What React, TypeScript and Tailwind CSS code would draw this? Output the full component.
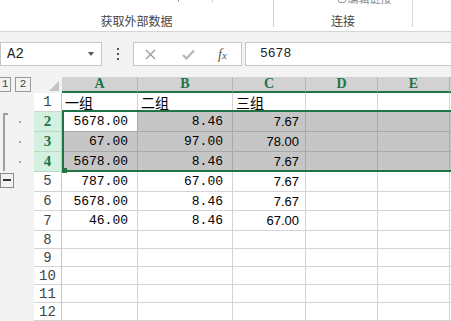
import React from "react";

type Cell = { v: string; kind: "mono" | "sans" | "cjk" };

const rowsData: (Cell[] | null)[] = [
  [
    { v: "一组", kind: "cjk" },
    { v: "二组", kind: "cjk" },
    { v: "三组", kind: "cjk" },
  ],
  [
    { v: "5678.00", kind: "mono" },
    { v: "8.46", kind: "mono" },
    { v: "7.67", kind: "sans" },
  ],
  [
    { v: "67.00", kind: "mono" },
    { v: "97.00", kind: "mono" },
    { v: "78.00", kind: "sans" },
  ],
  [
    { v: "5678.00", kind: "mono" },
    { v: "8.46", kind: "mono" },
    { v: "7.67", kind: "sans" },
  ],
  [
    { v: "787.00", kind: "mono" },
    { v: "67.00", kind: "mono" },
    { v: "7.67", kind: "sans" },
  ],
  [
    { v: "5678.00", kind: "mono" },
    { v: "8.46", kind: "mono" },
    { v: "7.67", kind: "sans" },
  ],
  [
    { v: "46.00", kind: "mono" },
    { v: "8.46", kind: "mono" },
    { v: "67.00", kind: "sans" },
  ],
  null,
  null,
  null,
  null,
  null,
];

const rowHeights = ["h-[19px]", "h-[20px]", "h-[20px]", "h-[20px]", "h-[20px]", "h-[20px]", "h-[20px]", "h-[18px]", "h-[18px]", "h-[18px]", "h-[18px]", "h-[18px]"];
const colWidths = ["w-[76px]", "w-[95px]", "w-[73px]", "w-[72px]", "w-[72px]"];
const colLetters = ["A", "B", "C", "D", "E"];

function Ribbon() {
  return (
    <div className="relative flex h-[32px] shrink-0 border-b border-[#d5d5d5] bg-white">
      <div className="relative flex h-[27px] w-[274px] flex-col items-center justify-end border-r border-[#d5d5d5]">
        <div className="absolute left-[178px] top-0 h-[2px] w-px bg-[#9a9a9a]" />
        <div className="absolute left-[212px] top-0 h-[2px] w-px bg-[#c8c8c8]" />
        <span className="text-[12px] leading-[12px] text-[#444]">获取外部数据</span>
      </div>
      <div className="flex h-[27px] w-[139px] flex-col items-center justify-between border-r border-[#d5d5d5]">
        <div className="ml-[-1px] h-[5px] w-full overflow-hidden pl-[64px]">
          <div className="mt-[-9px] flex items-center gap-[2px] text-[11px] leading-[14px] text-[#8a8a8a]">
            <span className="inline-block h-[10px] w-[8px] rounded-[2px] border border-[#9a9a9a]" />
            <span>编辑链接</span>
          </div>
        </div>
        <span className="text-[12px] leading-[12px] text-[#444]">连接</span>
      </div>
    </div>
  );
}

function FormulaBar() {
  return (
    <div className="flex h-[45px] shrink-0 items-start bg-[#f3f3f3] pt-[10px]">
      <div className="flex h-[24px] w-[102px] items-center justify-between border border-[#c6c6c6] bg-white pl-[6px] pr-[7px]">
        <span className="[font-family:'Liberation_Mono',monospace] text-[14px] text-[#222]">A2</span>
        <span className="h-0 w-0 border-l-[3.5px] border-r-[3.5px] border-t-[4px] border-l-transparent border-r-transparent border-t-[#555]" />
      </div>
      <div className="flex h-[24px] w-[31px] flex-col items-center justify-center gap-[3px]">
        <span className="h-[2px] w-[2px] bg-[#555]" />
        <span className="h-[2px] w-[2px] bg-[#555]" />
        <span className="h-[2px] w-[2px] bg-[#555]" />
      </div>
      <div className="flex h-[24px] w-[109px] items-center border border-[#c6c6c6] bg-white">
        <svg width="11" height="11" viewBox="0 0 11 11" className="ml-[11px]">
          <path d="M1 1 L10 10 M10 1 L1 10" stroke="#9a9a9a" strokeWidth="1.3" />
        </svg>
        <svg width="13" height="11" viewBox="0 0 13 11" className="ml-[26px]">
          <path d="M1 6 L4.5 9.5 L12 1.5" stroke="#b5b5b5" strokeWidth="2.2" fill="none" />
        </svg>
        <span className="ml-[23px] [font-family:'Liberation_Serif',serif] text-[14px] italic text-[#555]">
          f<span className="text-[11px]">x</span>
        </span>
      </div>
      <div className="ml-[3px] flex h-[24px] flex-1 items-center border border-r-0 border-[#c6c6c6] bg-white pl-[14px]">
        <span className="[font-family:'Liberation_Mono',monospace] text-[13px] text-[#222]">5678</span>
      </div>
    </div>
  );
}

function HeaderRow() {
  return (
    <div className="flex h-[16px]">
      <div className="relative w-[34px] bg-[#f3f3f3]">
        <div className="absolute left-[-1px] top-0 flex h-[15px] w-[12px] items-center justify-center border border-[#9a9a9a] bg-[#f3f3f3] [font-family:'Liberation_Mono',monospace] text-[11px] text-[#444]">
          1
        </div>
        <div className="absolute left-[15px] top-0 flex h-[15px] w-[16px] items-center justify-center border border-[#9a9a9a] bg-[#f3f3f3] [font-family:'Liberation_Mono',monospace] text-[11px] text-[#444]">
          2
        </div>
      </div>
      <div className="relative w-[28px] bg-[#f3f3f3]">
        <svg width="10" height="10" viewBox="0 0 10 10" className="absolute left-[15px] top-[4px]">
          <polygon points="10,0 10,10 0,10" fill="#c4c4c4" />
        </svg>
      </div>
      {colLetters.map((l, i) => (
        <div
          key={l}
          className={`${colWidths[i]} flex items-center justify-center border-b-2 border-r border-b-[#217346] border-r-[#b4b4b4] bg-[#d2d2d2] [font-family:'Liberation_Serif',serif] text-[14px] font-bold leading-none text-[#217346]`}
        >
          {l}
        </div>
      ))}
      <div className="flex-1 border-b-2 border-b-[#217346] bg-[#d2d2d2]" />
    </div>
  );
}

function DataRow({ idx }: { idx: number }) {
  const r = idx + 1;
  const data = rowsData[idx];
  const selected = r >= 2 && r <= 4;
  return (
    <div className={`flex ${rowHeights[idx]}`}>
      <div className="relative flex w-[34px] items-center bg-[#f3f3f3]">
        {selected && <span className="ml-[19px] h-[2px] w-[2px] bg-[#a8a8a8]" />}
        {r === 5 && (
          <div className="absolute left-0 top-[1px] flex h-[15px] w-[14px] items-center justify-center border border-[#8a8a8a] bg-[#f3f3f3]">
            <span className="h-[2px] w-[8px] bg-[#333]" />
          </div>
        )}
      </div>
      <div
        className={`flex w-[28px] items-center justify-center border-b border-r ${
          selected
            ? "border-b-[#b9d9c6] border-r-[#c6c6c6] bg-[#d3f0e0] [font-family:'Liberation_Serif',serif] text-[15px] font-bold text-[#217346]"
            : "border-b-[#d4d4d4] border-r-[#c6c6c6] bg-white [font-family:'Liberation_Mono',monospace] text-[14px] text-[#444]"
        } leading-none`}
      >
        {r}
      </div>
      {colWidths.map((w, ci) => {
        const cell = data && ci < 3 ? data[ci] : null;
        const active = r === 2 && ci === 0;
        const bg = selected ? (active ? "bg-white" : "bg-[#c6c6c6]") : "bg-white";
        const bc = selected ? "border-[#a9a9a9]" : "border-[#d4d4d4]";
        let content: React.ReactNode = null;
        let align = "justify-end";
        if (cell) {
          if (cell.kind === "cjk") {
            align = "justify-start pl-[3px]";
            content = (
              <span className="[font-family:'Noto_Sans_CJK_SC',sans-serif] text-[14px] leading-none text-black underline decoration-1 underline-offset-[3px]">
                {cell.v}
              </span>
            );
          } else if (cell.kind === "mono") {
            align = "justify-end pr-[9px]";
            content = <span className="[font-family:'Liberation_Mono',monospace] text-[13px] leading-none text-black">{cell.v}</span>;
          } else {
            align = "justify-end pr-[6px]";
            content = <span className="[font-family:'Liberation_Sans',sans-serif] text-[13px] leading-none text-black">{cell.v}</span>;
          }
        }
        return (
          <div key={ci} className={`${w} flex items-center border-b border-r ${bc} ${bg} ${align}`}>
            {content}
          </div>
        );
      })}
      <div className={`flex-1 border-b ${selected ? "border-[#a9a9a9] bg-[#c6c6c6]" : "border-[#d4d4d4] bg-white"}`} />
    </div>
  );
}

function Sheet() {
  return (
    <div className="relative flex flex-1 flex-col overflow-hidden bg-white">
      <HeaderRow />
      {rowsData.map((_, i) => (
        <DataRow key={i} idx={i} />
      ))}
      <div className="pointer-events-none absolute left-[3px] top-[36px] h-[58px] w-[5px] border-l-2 border-t-2 border-[#a0a0a0]" />
      <div className="pointer-events-none absolute left-[62px] top-[33px] h-[62px] w-[400px] border-2 border-[#217346]" />
      <div className="pointer-events-none absolute left-[62px] top-[91px] h-[5px] w-[5px] bg-[#217346]" />
    </div>
  );
}

export default function App() {
  return (
    <div className="flex h-[321px] w-[451px] flex-col overflow-hidden bg-white [font-family:'Noto_Sans_CJK_SC',sans-serif]">
      <Ribbon />
      <FormulaBar />
      <Sheet />
    </div>
  );
}
